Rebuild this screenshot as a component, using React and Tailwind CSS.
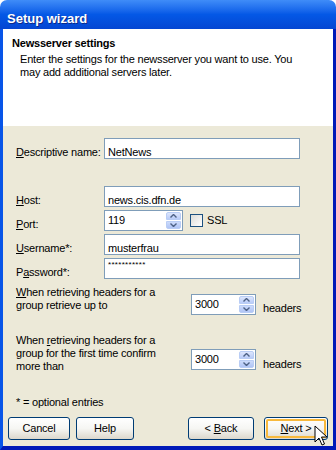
import React from 'react';

const font = { fontFamily: '"Liberation Sans", Arial, sans-serif' };

function Spinner({ value, width }) {
  return (
    <div className={`flex h-[21px] border border-[#7F9DB9] bg-white ${width}`}>
      <div className="flex-1 pl-[3px] text-[11px] leading-[18px] text-black">{value}</div>
      <div className="my-[1px] mr-[1px] flex w-[15px] flex-col gap-[1px]">
        <div className="flex flex-1 items-center justify-center rounded-t-[2px] border border-[#B9CDF5] bg-gradient-to-b from-[#DDE6FC] to-[#B9CCF8]">
          <svg width="7" height="4" viewBox="0 0 7 4"><path d="M0.5 3.5 L3.5 0.5 L6.5 3.5" stroke="#4D6185" strokeWidth="1.4" fill="none" /></svg>
        </div>
        <div className="flex flex-1 items-center justify-center rounded-b-[2px] border border-[#B9CDF5] bg-gradient-to-b from-[#CCDBFB] to-[#AFC4F5]">
          <svg width="7" height="4" viewBox="0 0 7 4"><path d="M0.5 0.5 L3.5 3.5 L6.5 0.5" stroke="#4D6185" strokeWidth="1.4" fill="none" /></svg>
        </div>
      </div>
    </div>
  );
}

function Field({ value, small }) {
  return (
    <div className="h-[21px] w-[196px] border border-[#7F9DB9] bg-white pl-[3px]">
      {small ? (
        <div className="pt-[2px] text-[8px] leading-[8px] tracking-[0.3px] text-black">***********</div>
      ) : (
        <span className="text-[11px] leading-[18px] text-black">{value}</span>
      )}
    </div>
  );
}

function Row({ label, children, className = '' }) {
  return (
    <div className={`flex items-end ${className}`}>
      <div className="w-[88px] whitespace-nowrap text-[11px] leading-[13px] text-black">{label}</div>
      {children}
    </div>
  );
}

function Button({ children, width, focused }) {
  return (
    <div className={`h-[23px] ${width} rounded-[3px] border border-[#003C74] bg-gradient-to-b from-white via-[#F6F6F3] to-[#DCD7CC] p-[1px]`}>
      <div className={`flex h-full items-center justify-center rounded-[2px] text-[11px] text-black ${focused ? 'border-2 border-[#F8B93C]' : ''}`}>
        <span className="whitespace-pre">{children}</span>
      </div>
    </div>
  );
}

export default function App() {
  return (
    <div className="relative flex h-[450px] w-[336px] flex-col overflow-hidden bg-white tracking-[-0.2px]" style={font}>
      <div className="h-[29px] rounded-t-[7px] bg-gradient-to-b from-[#3F8CF8] via-[#0458E6] to-[#0446D2] pl-[7px] pt-[6px]">
        <span className="text-[13px] font-bold leading-[16px] tracking-normal text-white [text-shadow:1px_1px_0_#0A2A8A]">Setup wizard</span>
      </div>
      <div className="flex flex-1 flex-col border-b-[4px] border-l-[3px] border-r-[3px] border-b-[#0019B8] border-l-[#0855E8] border-r-[#0019B8]">
        <div className="h-[97px] bg-white pl-[9px] pt-[8px]">
          <div className="text-[11px] font-bold leading-[13px] text-black">Newsserver settings</div>
          <div className="pl-[8px] pt-[3px] text-[11px] leading-[13px] text-black">
            Enter the settings for the newsserver you want to use. You<br />may add additional servers later.
          </div>
        </div>
        <div className="flex flex-1 flex-col bg-[#ECE9D8] pl-[13px] pr-[5px]">
          <Row label={<><u>D</u>escriptive name:</>} className="mt-[12px]">
            <Field value="NetNews" />
          </Row>
          <Row label={<><u>H</u>ost:</>} className="mt-[27px]">
            <Field value="news.cis.dfn.de" />
          </Row>
          <Row label={<><u>P</u>ort:</>} className="mt-[3px]">
            <Spinner value="119" width="w-[79px]" />
            <div className="mb-[1px] ml-[7px] flex items-center gap-[4px] self-center">
              <div className="h-[13px] w-[13px] border border-[#1C5180] bg-gradient-to-br from-[#DCDCD7] to-white" />
              <span className="text-[11px] text-black">SSL</span>
            </div>
          </Row>
          <Row label={<><u>U</u>sername*:</>} className="mt-[3px]">
            <Field value="musterfrau" />
          </Row>
          <Row label={<>P<u>a</u>ssword*:</>} className="mt-[3px]">
            <Field small />
          </Row>
          <div className="mt-[7px] flex items-start">
            <div className="w-[175px] text-[11px] leading-[13px] text-black">
              <u>W</u>hen retrieving headers for a<br />group retrieve up to
            </div>
            <div className="mt-[8px]"><Spinner value="3000" width="w-[65px]" /></div>
            <div className="ml-[7px] mt-[16px] text-[11px] leading-[13px] text-black">headers</div>
          </div>
          <div className="mt-[19px] flex items-start">
            <div className="w-[175px] text-[11px] leading-[13px] text-black">
              When <u>r</u>etrieving headers for a<br />group for the first time confirm<br />more than
            </div>
            <div className="mt-[15px]"><Spinner value="3000" width="w-[65px]" /></div>
            <div className="ml-[7px] mt-[24px] text-[11px] leading-[13px] text-black">headers</div>
          </div>
          <div className="mt-[23px] text-[11px] leading-[13px] text-black">* = optional entries</div>
          <div className="-ml-[8px] mt-[8px] flex">
            <Button width="w-[62px]">Cancel</Button>
            <div className="ml-[6px]"><Button width="w-[58px]">Help</Button></div>
            <div className="ml-auto"><Button width="w-[66px]">{'< '}<u>B</u>ack</Button></div>
            <div className="ml-[10px]"><Button width="w-[64px]" focused><u>N</u>ext{' >'}</Button></div>
          </div>
        </div>
      </div>
      <svg className="absolute left-[314px] top-[425px]" width="14" height="22" viewBox="0 0 14 22">
        <path d="M1 1 L1 17 L5 13 L8 20 L10.5 19 L7.5 12 L13 12 Z" fill="white" stroke="black" strokeWidth="1" strokeLinejoin="miter" />
      </svg>
    </div>
  );
}
